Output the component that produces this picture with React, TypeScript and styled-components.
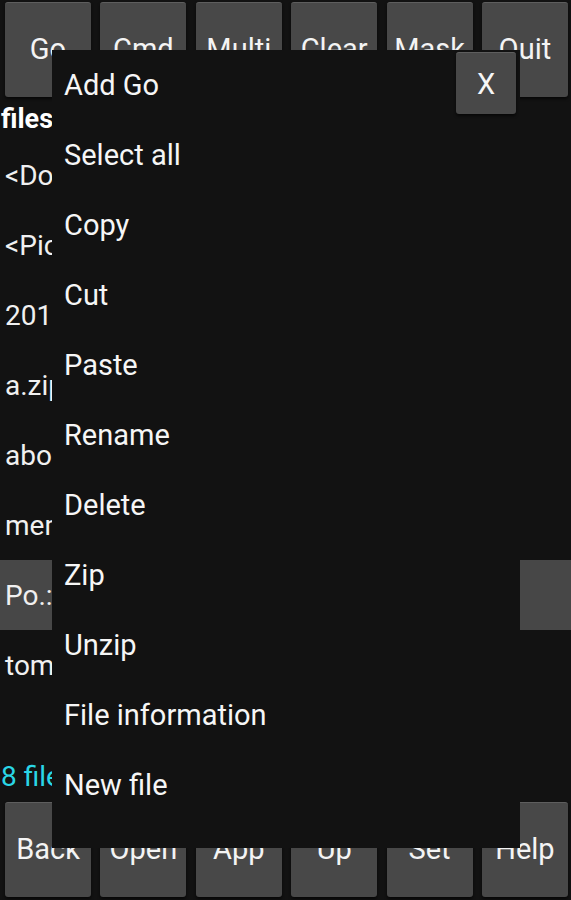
import React from "react";
import styled, { createGlobalStyle } from "styled-components";

const Global = createGlobalStyle`
  html, body { margin: 0; padding: 0; background: #121212; }
  body { font-family: Roboto, "Noto Sans", "Liberation Sans", sans-serif; color: #f2f2f2; }
  * { box-sizing: border-box; }
`;

const Page = styled.div`
  position: relative;
  width: 571px;
  height: 900px;
  overflow: hidden;
  display: flex;
  flex-direction: column;
  background: #121212;
`;

const Toolbar = styled.div<{ $top?: boolean }>`
  display: grid;
  grid-template-columns: repeat(6, 86px);
  column-gap: 9.4px;
  padding: ${(p) => (p.$top ? "2px 0 0 5px" : "0 0 2px 5px")};
  height: ${(p) => (p.$top ? "97px" : "98px")};
`;

const ToolButton = styled.div`
  height: 95px;
  background: #484848;
  border-top: 1px solid #5e5e5e;
  border-radius: 3px;
  box-shadow: 0 2px 3px rgba(0, 0, 0, 0.6);
  display: flex;
  align-items: center;
  justify-content: center;
  font-size: 29px;
  color: #f4f4f4;
  padding-bottom: 2px;
`;

const Title = styled.div`
  height: 43px;
  display: flex;
  align-items: center;
  padding-left: 1px;
  font-weight: 700;
  font-size: 27px;
  color: #ffffff;
`;

const List = styled.div`
  display: flex;
  flex-direction: column;
`;

const Row = styled.div<{ $selected?: boolean }>`
  height: 70px;
  display: flex;
  align-items: center;
  padding-left: 5px;
  font-size: 28px;
  color: #f0f0f0;
  background: ${(p) => (p.$selected ? "#474747" : "transparent")};
`;

const Status = styled.div`
  flex: 1;
  display: flex;
  align-items: center;
  padding: 50px 0 0 1px;
  font-size: 28px;
  color: #2ad6e6;
`;

const Dialog = styled.div`
  position: absolute;
  left: 52px;
  top: 50px;
  width: 468px;
  height: 798px;
  background: #121212;
  display: flex;
  flex-direction: column;
`;

const MenuItem = styled.div`
  height: 70px;
  display: flex;
  align-items: center;
  padding-left: 12px;
  font-size: 29px;
  color: #f6f6f6;
`;

const CloseButton = styled.div`
  position: absolute;
  top: 2px;
  right: 4px;
  width: 60px;
  height: 62px;
  background: #484848;
  border-top: 1px solid #5e5e5e;
  border-radius: 3px;
  box-shadow: 0 2px 3px rgba(0, 0, 0, 0.6);
  display: flex;
  align-items: center;
  justify-content: center;
  font-size: 29px;
  color: #f6f6f6;
`;

const topLabels = ["Go", "Cmd", "Multi", "Clear", "Mask", "Quit"];
const bottomLabels = ["Back", "Open", "App", "Up", "Set", "Help"];
const files = [
  "<Download>",
  "<Pictures>",
  "2019.txt",
  "a.zip",
  "about.txt",
  "memo.txt",
  "Po.:",
  "tomato",
];
const menu = [
  "Add Go",
  "Select all",
  "Copy",
  "Cut",
  "Paste",
  "Rename",
  "Delete",
  "Zip",
  "Unzip",
  "File information",
  "New file",
];

export default function App() {
  return (
    <>
      <Global />
      <Page>
        <Toolbar $top>
          {topLabels.map((l) => (
            <ToolButton key={l}>{l}</ToolButton>
          ))}
        </Toolbar>
        <Title>files</Title>
        <List>
          {files.map((f, i) => (
            <Row key={f} $selected={i === 6}>
              {f}
            </Row>
          ))}
        </List>
        <Status>8 files</Status>
        <Toolbar>
          {bottomLabels.map((l) => (
            <ToolButton key={l}>{l}</ToolButton>
          ))}
        </Toolbar>
        <Dialog>
          {menu.map((m) => (
            <MenuItem key={m}>{m}</MenuItem>
          ))}
          <CloseButton>X</CloseButton>
        </Dialog>
      </Page>
    </>
  );
}
